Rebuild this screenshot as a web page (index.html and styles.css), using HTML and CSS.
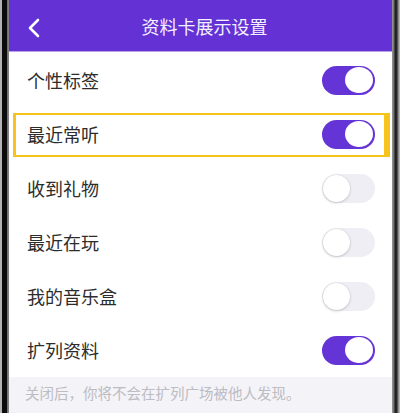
FILE: index.html
```html
<!DOCTYPE html>
<html lang="zh-CN">
<head>
<meta charset="utf-8">
<title>资料卡展示设置</title>
<link rel="stylesheet" href="styles.css">
</head>
<body>
<div class="bezel bezel-left"></div>
<main class="screen">
  <header class="topbar">
    <svg class="back" width="14" height="20" viewBox="0 0 14 20" aria-hidden="true">
      <path d="M11 2 L3 10 L11 18" fill="none" stroke="#fff" stroke-width="2.6" stroke-linecap="round" stroke-linejoin="round"/>
    </svg>
    <h1 class="title">资料卡展示设置</h1>
  </header>
  <ul class="list">
    <li class="row"><span class="label">个性标签</span><span class="switch on"><span class="knob"></span></span></li>
    <li class="row marked"><span class="label">最近常听</span><span class="switch on"><span class="knob"></span></span><span class="mark"></span></li>
    <li class="row"><span class="label">收到礼物</span><span class="switch"><span class="knob"></span></span></li>
    <li class="row"><span class="label">最近在玩</span><span class="switch"><span class="knob"></span></span></li>
    <li class="row"><span class="label">我的音乐盒</span><span class="switch"><span class="knob"></span></span></li>
    <li class="row"><span class="label">扩列资料</span><span class="switch on"><span class="knob"></span></span></li>
  </ul>
  <p class="note">关闭后，你将不会在扩列广场被他人发现。</p>
</main>
<div class="bezel bezel-right"></div>
</body>
</html>
```

FILE: styles.css
```css
* { box-sizing: border-box; }

html, body {
  margin: 0;
  padding: 0;
  height: 413px;
  overflow: hidden;
}

body {
  display: flex;
  width: 400px;
  font-family: "Noto Sans CJK SC", "Noto Sans", sans-serif;
  background: #fff;
}

.bezel { flex: none; height: 100%; }
.bezel-left {
  width: 9px;
  background: linear-gradient(to right, #b4b4b4 0, #b4b4b4 2px, #0c0c0c 2px, #0c0c0c 7px, #6a6a6a 7px, #8a8a8a 9px);
}
.bezel-right {
  width: 8px;
  background: linear-gradient(to right, #9a9a9a 0, #6c6c6c 2px, #1e1e1e 3px, #2a2a2a 5px, #7a7a7a 6px, #c8c8c8 8px);
}

.screen {
  flex: 1;
  display: flex;
  flex-direction: column;
  background: #fff;
}

.topbar {
  position: relative;
  height: 52px;
  flex: none;
  display: flex;
  align-items: center;
  justify-content: center;
  background: #6331d4;
  border-bottom: 1px solid #b9a2ec;
}

.back {
  position: absolute;
  left: 18px;
  top: 18px;
}

.title {
  margin: 0;
  margin-left: 8px;
  font-size: 18px;
  font-weight: 400;
  color: #f4f0ff;
  letter-spacing: 0;
}

.list {
  list-style: none;
  margin: 0;
  padding: 1px 0 0;
}

.row {
  position: relative;
  height: 54px;
  display: flex;
  align-items: center;
  justify-content: space-between;
  padding: 0 17px 0 18px;
}

.label {
  font-size: 18px;
  color: #2c2c2c;
  line-height: 1;
}

.switch {
  position: relative;
  width: 53px;
  height: 29px;
  border-radius: 15px;
  background: #efeef4;
  flex: none;
}
.switch .knob {
  position: absolute;
  top: 1px;
  left: 1px;
  width: 27px;
  height: 27px;
  border-radius: 50%;
  background: #fff;
  box-shadow: 0 1px 3px rgba(0, 0, 0, 0.18), 0 0 0 0.5px rgba(0, 0, 0, 0.05);
}
.switch.on { background: #6534d6; }
.switch.on .knob {
  left: 23px;
  top: 1.5px;
  width: 28px;
  height: 26px;
  box-shadow: none;
}

/* yellow frame drawn over the second row */
.mark {
  position: absolute;
  left: 4px;
  right: 2px;
  top: 6px;
  bottom: 4px;
  border: 2px solid #f6c41c;
  border-left-width: 3px;
  border-right-width: 6px;
  pointer-events: none;
}

.note {
  margin: 0;
  flex: 1;
  background: #f4f3f8;
  padding: 4px 0 0 16px;
  font-size: 14.5px;
  color: #bcbcc2;
  line-height: 24px;
}
```
